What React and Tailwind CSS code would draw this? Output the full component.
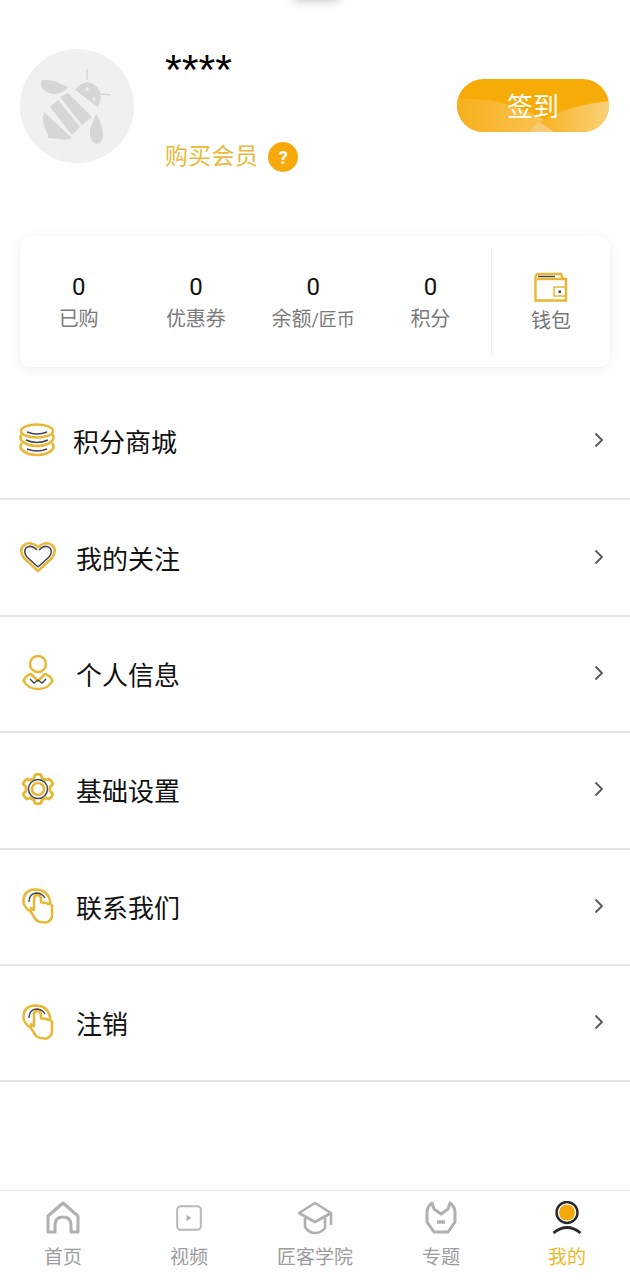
const FONT = 'font-["Roboto","Noto_Sans_CJK_SC",sans-serif]';

function Bee() {
  return (
    <svg width="114" height="114" viewBox="0 0 114 114" fill="#d6d6d6">
      {/* antennae */}
      <path d="M67 31 L67 20 M80 45 L91 46" stroke="#d6d6d6" strokeWidth="1.5" fill="none" />
      {/* head */}
      <path d="M55 41 Q60 34 67 33 Q76 34 80 43 Q82 51 78 58 Z" />
      <circle cx="67" cy="40" r="1.7" fill="#f0f0f0" />
      <circle cx="74" cy="50" r="1.7" fill="#f0f0f0" />
      {/* upper wing */}
      <path d="M22 31 Q30 29 48 38 Q42 46 32 45 Q21 42 21 35 Z" />
      {/* stripes */}
      <path d="M40 48 L48 44 L72 68 L62 76 Z" />
      <path d="M30 58 L38 51 L60 78 L52 86 Z" />
      {/* tail */}
      <path d="M24 63 L52 89 Q46 92 40 90 L28 89 L28 85 Q21 75 24 63 Z" />
      {/* lower wing */}
      <path d="M76 65 Q84 78 83 88 Q80 97 74 94 Q69 91 70 80 Z" />
    </svg>
  );
}

function Waves() {
  return (
    <svg className="absolute inset-0" width="152" height="53" viewBox="0 0 152 53" preserveAspectRatio="none">
      <defs>
        <linearGradient id="btnA" x1="0" x2="1" y1="0" y2="0">
          <stop offset="0" stopColor="#f7b01c" />
          <stop offset="1" stopColor="#f9c65c" />
        </linearGradient>
        <linearGradient id="btnB" x1="0" x2="1" y1="0" y2="0">
          <stop offset="0" stopColor="#f7af14" />
          <stop offset="1" stopColor="#fad078" />
        </linearGradient>
      </defs>
      <path d="M0 20 Q55 18 95 46 Q102 51 100 53 L0 53 Z" fill="url(#btnA)" />
      <path d="M72 53 Q95 28 152 22 L152 53 Z" fill="url(#btnB)" />
      <path d="M72 53 Q78 47 82 43 Q90 47 97 53 Z" fill="#f9cb74" />
    </svg>
  );
}

function Wallet() {
  return (
    <svg width="34" height="30" viewBox="0 0 34 30" fill="none" stroke="#e9b632" strokeWidth="2.400">
      <path d="M1.500 6 Q1.500 2 5 2 L27 2 L29 7 L32 7 L32 28.500 L1.500 28.500 Z" />
      <path d="M3 7 L29 7" />
      <path d="M4 4.500 L21 4.500" stroke="#444" strokeWidth="1.400" />
      <rect x="20" y="15" width="12" height="9" strokeWidth="1.500" />
      <rect x="24.500" y="18.500" width="2.500" height="2.500" fill="#444" stroke="none" />
    </svg>
  );
}

const Y = '#e8b733';
const D = '#44444f';

function CoinsIcon() {
  return (
    <svg width="36" height="34" viewBox="0 0 36 34" fill="none" stroke={Y} strokeWidth="2.500">
      <ellipse cx="18" cy="8" rx="16" ry="6.500" />
      <path d="M3 11 Q0 15 3 18 Q8 23 18 23 Q28 23 33 18 Q36 15 33 11" />
      <path d="M3 20 Q0 24 3 27 Q8 32 18 32 Q28 32 33 27 Q36 24 33 20" />
      <path d="M8 9 Q18 13 28 9 M7 17 Q18 22 29 17 M8 26 Q18 30 28 26" stroke={D} strokeWidth="1.400" />
    </svg>
  );
}

function HeartIcon() {
  return (
    <svg width="36" height="32" viewBox="0 0 36 32" fill="none">
      <path d="M18 30 L4 17 Q-1 10 3 5 Q9 -1 18 6 Q27 -1 33 5 Q37 10 32 17 Z" stroke={Y} strokeWidth="2.500" strokeLinejoin="round" />
      <path d="M18 26 L7 16 Q3 11 6 7 Q11 3 17 9 M19 9 Q25 3 30 7 Q33 11 29 16 L18 26" stroke={D} strokeWidth="1.500" />
    </svg>
  );
}

function UserIcon() {
  return (
    <svg width="32" height="36" viewBox="0 0 32 36" fill="none" stroke={Y} strokeWidth="2.500">
      <circle cx="16" cy="9" r="8" />
      <path d="M9 19 Q4 20 1.500 26 Q6 34 16 34 Q26 34 30.500 26 Q28 20 23 19 L16 26 Z" strokeLinejoin="round" />
      <path d="M8 24 L12 28 L16 25 L20 28 L24 24" stroke={D} strokeWidth="1.400" />
    </svg>
  );
}

function GearIcon() {
  return (
    <svg width="32" height="32" viewBox="0 0 32 32" fill="none">
      <path
        d="M13 2 Q16 0 19 2 L20 5 L24 7 L27 6 Q30 8 31 11 L28 14 L28 18 L31 21 Q30 24 27 26 L24 25 L20 27 L19 30 Q16 32 13 30 L12 27 L8 25 L5 26 Q2 24 1 21 L4 18 L4 14 L1 11 Q2 8 5 6 L8 7 L12 5 Z"
        stroke={Y}
        strokeWidth="2.800"
        strokeLinejoin="round"
      />
      <circle cx="16" cy="16" r="9.500" stroke={D} strokeWidth="1.500" />
      <circle cx="16" cy="16" r="6" stroke={Y} strokeWidth="2.500" />
    </svg>
  );
}

function TouchIcon() {
  return (
    <svg width="32" height="36" viewBox="0 0 32 36" fill="none" stroke={Y} strokeWidth="2.500" strokeLinejoin="round">
      <path d="M9 24 Q1 19 1.500 12 Q2 2 13 1.500 Q25 1.500 28 12 L28 17" />
      <path d="M9 24 L14 32 Q18 35 24 34.500 Q30 33 30 27 L30 18 Q29 15 26 16 Q24 14 22 15 L19 14 L19 10 Q18 7 15 7 Q12 7 12 11 L12 22 L9 20 Z" />
      <path d="M7 14 Q7 6 14 5 Q20 5 23 10" stroke={D} strokeWidth="1.400" />
    </svg>
  );
}

function Chevron() {
  return (
    <svg width="10" height="16" viewBox="0 0 10 16" fill="none" stroke="#555" strokeWidth="1.800">
      <path d="M1.500 1.500 L8 8 L1.500 14.500" />
    </svg>
  );
}

function HomeNav() {
  return (
    <svg width="34" height="33" viewBox="0 0 34 33" fill="none" stroke="#b0b0b0" strokeWidth="3" strokeLinejoin="round">
      <path d="M17 2 L32 15 L32 31 L25 31 L25 24 Q25 16 17 16 Q9 16 9 24 L9 31 L2 31 L2 15 Z" />
    </svg>
  );
}

function VideoNav() {
  return (
    <svg width="26" height="26" viewBox="0 0 26 26" fill="none">
      <rect x="1.200" y="1.200" width="23.600" height="23.600" rx="3.500" stroke="#b8b8b8" strokeWidth="2" />
      <path d="M10.500 10 L15.500 13 L10.500 16 Z" fill="#b0b0b0" />
    </svg>
  );
}

function CapNav() {
  return (
    <svg width="36" height="34" viewBox="0 0 36 34" fill="none" stroke="#b0b0b0" strokeWidth="2.600" strokeLinejoin="round">
      <path d="M18 2 L34 12 L18 21 L2 12 Z" />
      <path d="M8 17 L8 26 Q12 32 18 32 Q24 32 28 27 L28 17" />
      <path d="M34 12 L34 24" />
    </svg>
  );
}

function MaskNav() {
  return (
    <svg width="32" height="33" viewBox="0 0 32 33" fill="none" stroke="#b0b0b0" strokeWidth="3" strokeLinejoin="round">
      <path d="M7 2 L9 8 L16 13 L23 8 L25 2 Q30 6 30 11 L30 21 L23 31 L9 31 L2 21 L2 11 Q2 6 7 2 Z" />
      <path d="M12 21 L20 21" strokeWidth="3.500" />
    </svg>
  );
}

function MeNav() {
  return (
    <svg width="30" height="33" viewBox="0 0 30 33" fill="none">
      <circle cx="15" cy="11.500" r="10.500" stroke="#2a2a2a" strokeWidth="2.400" />
      <circle cx="15" cy="11.500" r="8" fill="#f5a80a" />
      <path d="M1.500 32 Q15 21 28.500 32" stroke="#2a2a2a" strokeWidth="2.800" />
    </svg>
  );
}

const stats = [
  { value: '0', label: '已购' },
  { value: '0', label: '优惠券' },
  { value: '0', label: '余额/匠币' },
  { value: '0', label: '积分' },
];

const menu = [
  { label: '积分商城', icon: <CoinsIcon />, pl: 'pl-[19px]', gap: 'gap-[19px]' },
  { label: '我的关注', icon: <HeartIcon />, pl: 'pl-5', gap: 'gap-[21px]' },
  { label: '个人信息', icon: <UserIcon />, pl: 'pl-[22px]', gap: 'gap-[23px]' },
  { label: '基础设置', icon: <GearIcon />, pl: 'pl-[22px]', gap: 'gap-[23px]' },
  { label: '联系我们', icon: <TouchIcon />, pl: 'pl-[22px]', gap: 'gap-[23px]' },
  { label: '注销', icon: <TouchIcon />, pl: 'pl-[22px]', gap: 'gap-[23px]' },
];

const tabs = [
  { label: '首页', icon: <HomeNav /> },
  { label: '视频', icon: <VideoNav /> },
  { label: '匠客学院', icon: <CapNav /> },
  { label: '专题', icon: <MaskNav /> },
  { label: '我的', icon: <MeNav />, active: true },
];

export default function App() {
  return (
    <div className={`relative flex flex-col w-[630px] h-[1280px] overflow-hidden bg-white ${FONT}`}>
      {/* sliver of a shadow at the top edge */}
      <div className="absolute -top-[14px] left-[292px] w-[50px] h-[16px] rounded-full bg-[#cfcfcf] blur-[4px]" />

      {/* Profile */}
      <div className="flex items-start pt-[49px] pl-5 pr-[21px]">
        <div className="w-[114px] h-[114px] rounded-full bg-[#f0f0f0] shrink-0">
          <Bee />
        </div>
        <div className="ml-[31px] flex-1 h-[114px] flex flex-col">
          <div className="text-[43px] leading-[44px] mt-[-2px] text-black font-['Liberation_Sans']">****</div>
          <div className="mt-auto mb-[-9px] flex items-center gap-[10px]">
            <span className="text-[23px] leading-[30px] tracking-[0.3px] text-[#e9b93a]">购买会员</span>
            <span className="w-[30px] h-[30px] rounded-full bg-[#f7a90c] text-white text-[18px] font-bold flex items-center justify-center">?</span>
          </div>
        </div>
        <button className="relative mt-[30px] w-[152px] h-[53px] rounded-full overflow-hidden bg-[#f7ab07] text-white text-[26px]">
          <Waves />
          <span className="relative top-[2px]">签到</span>
        </button>
      </div>

      {/* Stats card */}
      <div className="mt-[73px] mx-5 h-[131px] rounded-[10px] bg-white shadow-[0_2px_12px_rgba(0,0,0,0.07)] flex items-center">
        <div className="w-[469px] mr-[2px] grid grid-cols-4 pt-[3px]">
          {stats.map((s) => (
            <div key={s.label} className="flex flex-col items-center">
              <span className="text-[24px] leading-[30px] text-[#111]">{s.value}</span>
              <span className="mt-[2px] text-[20px] leading-[30px] text-[#7a7a7a] whitespace-nowrap">
                {s.label === '余额/匠币' ? (
                  <>余额<span className="text-[18px]">/匠币</span></>
                ) : s.label}
              </span>
            </div>
          ))}
        </div>
        <div className="w-px h-[106px] bg-[#ececec]" />
        <div className="flex-1 flex flex-col items-center pt-[5px]">
          <Wallet />
          <span className="mt-[4px] text-[20px] leading-[30px] text-[#777]">钱包</span>
        </div>
      </div>

      {/* Menu */}
      <div className="mt-[17px]">
        {menu.map((m) => (
          <div key={m.label} className={`h-[116.4px] flex items-center border-b-2 border-[#e4e4e4] ${m.pl} pr-[26px] ${m.gap}`}>
            <div className="shrink-0 flex items-center justify-center -mt-[2px]">{m.icon}</div>
            <span className="relative top-[2px] -left-px flex-1 text-[26px] leading-[34px] text-[#111]">{m.label}</span>
            <div className="-mt-[2px]"><Chevron /></div>
          </div>
        ))}
      </div>

      {/* Tab bar */}
      <div className="mt-auto h-[90px] border-t border-[#e2e2e2] grid grid-cols-5">
        {tabs.map((t) => (
          <div key={t.label} className="flex flex-col items-center">
            <div className="h-[33px] mt-[10px] flex items-center justify-center">{t.icon}</div>
            <span className={`mt-[10px] text-[19px] leading-[28px] ${t.active ? 'text-[#eeb82c]' : 'text-[#9c9c9c]'}`}>{t.label}</span>
          </div>
        ))}
      </div>
    </div>
  );
}
